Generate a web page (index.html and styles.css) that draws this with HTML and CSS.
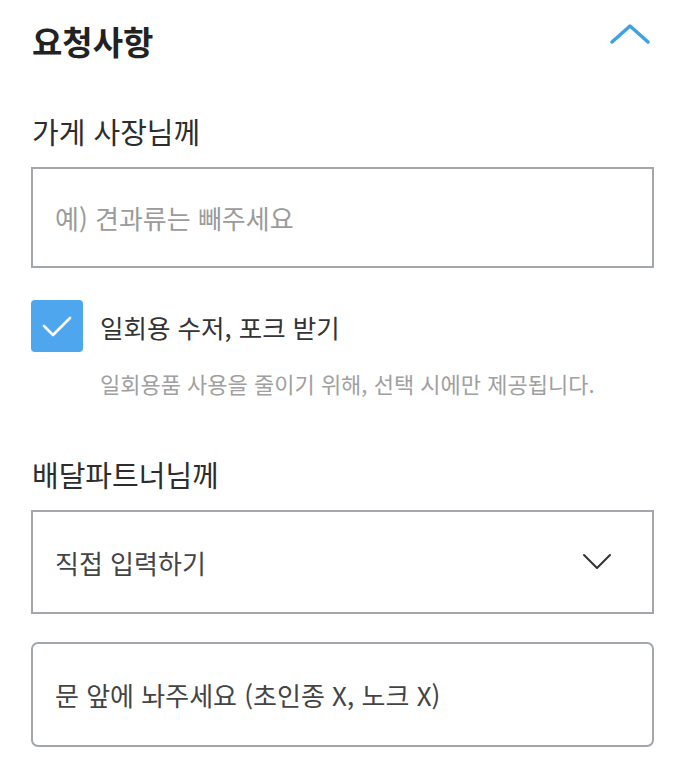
FILE: index.html
```html
<!DOCTYPE html>
<html lang="ko">
<head>
    <meta charset="UTF-8">
    <meta name="viewport" content="width=device-width, initial-scale=1.0">
    <title>요청사항</title>
    <link rel="stylesheet" href="styles.css">
</head>
<body>
    <div class="request">
        <div class="request-header">
            <h2>요청사항</h2>
            <svg class="chevron-up" width="40" height="24" viewBox="0 0 40 24">
                <polyline points="2,20 20,4 38,20" fill="none" stroke="#3fa2e2" stroke-width="3.5" stroke-linecap="round" stroke-linejoin="round"/>
            </svg>
        </div>

        <div class="section-label">가게 사장님께</div>
        <div class="field field-store">
            <span class="placeholder">예) 견과류는 빼주세요</span>
        </div>

        <div class="check-row">
            <span class="checkbox">
                <svg width="30" height="24" viewBox="0 0 30 24">
                    <polyline points="2,12 11,21 28,4" fill="none" stroke="#fff" stroke-width="2.6" stroke-linecap="round" stroke-linejoin="round"/>
                </svg>
            </span>
            <span class="check-label">일회용 수저, 포크 받기</span>
        </div>
        <p class="hint">일회용품 사용을 줄이기 위해, 선택 시에만 제공됩니다.</p>

        <div class="section-label section-rider">배달파트너님께</div>
        <div class="field field-select">
            <span class="value">직접 입력하기</span>
            <svg class="chevron-down" width="30" height="18" viewBox="0 0 30 18">
                <polyline points="2,2 15,15 28,2" fill="none" stroke="#333" stroke-width="2" stroke-linecap="round" stroke-linejoin="round"/>
            </svg>
        </div>
        <div class="field field-rider">
            <span class="value">문 앞에 놔주세요 (초인종 X, 노크 X)</span>
        </div>
    </div>
</body>
</html>
```

FILE: styles.css
```css
* {
    margin: 0;
    padding: 0;
    box-sizing: border-box;
}

body {
    font-family: "Noto Sans CJK KR", "Noto Sans", sans-serif;
    background: white;
    color: #333;
}

.request {
    padding: 0 32px 0 31px;
}

.request-header {
    height: 82px;
    display: flex;
    justify-content: space-between;
    align-items: center;
    padding-left: 1px;
}

.request-header h2 {
    font-size: 33px;
    font-weight: 700;
    line-height: 40px;
    color: #222;
}

.chevron-up {
    margin-right: 4px;
    margin-top: -14px;
}

.section-label {
    margin-top: 31px;
    padding-left: 1px;
    font-size: 29px;
    line-height: 36px;
    color: #2d2d2d;
}

.field {
    display: flex;
    align-items: center;
    justify-content: space-between;
    border: 2px solid #a3a7ab;
    padding: 0 40px 0 22px;
    font-size: 26px;
}

.field-store {
    margin-top: 18px;
    height: 101px;
}

.placeholder {
    color: #9b9b9b;
}

.value {
    color: #444;
}

.check-row {
    margin-top: 32px;
    display: flex;
    align-items: center;
    gap: 17px;
}

.checkbox {
    width: 52px;
    height: 52px;
    border-radius: 4px;
    background: #4ea6ee;
    display: flex;
    align-items: center;
    justify-content: center;
}

.check-label {
    font-size: 25.5px;
    color: #333;
}

.hint {
    margin-top: 17px;
    padding-left: 69px;
    font-size: 22px;
    line-height: 28px;
    color: #a0a0a0;
}

.section-rider {
    margin-top: 59px;
}

.field-select {
    margin-top: 18px;
    height: 104px;
}

.field-rider {
    margin-top: 28px;
    height: 105px;
    border-radius: 7px;
}
```
